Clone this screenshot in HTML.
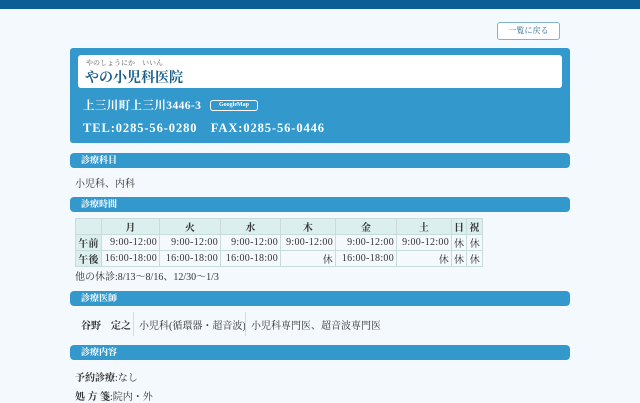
<!DOCTYPE html>
<html><head><meta charset="utf-8"><style>
*{margin:0;padding:0;box-sizing:border-box}
body{width:640px;height:400px;overflow:hidden;background:#f3f9fc;font-family:"Liberation Serif","Noto Serif CJK SC",serif;color:#333;position:relative;font-size:10px}
.a{position:absolute;white-space:nowrap}
.top{left:0;top:0;width:640px;height:9px;background:#0b5f97}
.btn{left:497px;top:22px;width:63px;height:18px;border:1px solid #7fb3cf;border-radius:3px;background:#fff;color:#2a6b95;font-size:8px;text-align:center;line-height:16px}
.main{left:70px;top:48px;width:500px;height:95px;background:#3399cc;border-radius:3px}
.inner{left:78px;top:55px;width:484px;height:33px;background:#fff;border-radius:3px}
.hd{left:70px;width:500px;height:15px;background:#3399cc;border-radius:4px;color:#fff;font-weight:bold;font-size:9px;line-height:15px;padding-left:11px}
table{position:absolute;left:75px;top:218px;width:407px;table-layout:fixed;border-collapse:collapse;font-size:10px;letter-spacing:0.3px}
td,th{border:1px solid #c8dcdc;height:15px;padding:0 2px;text-align:right;white-space:nowrap;overflow:hidden}
th{background:#dcefef;text-align:center;font-weight:bold}
td.l{background:#dcefef;font-weight:bold;text-align:center}
.vl{width:1px;background:#cfdde5;top:312px;height:24px}
</style></head><body>
<div class="a top"></div>
<div class="a btn">一覧に戻る</div>
<div class="a main"></div>
<div class="a inner"></div>
<div class="a" style="left:86px;top:58px;font-size:7px;color:#555">やのしょうにか　いいん</div>
<div class="a" style="left:85px;top:67px;font-size:14px;font-weight:bold;color:#1b5d8c">やの小児科医院</div>
<div class="a" style="left:83px;top:97px;font-size:11.5px;font-weight:bold;color:#fff;letter-spacing:0.4px">上三川町上三川3446-3</div>
<div class="a" style="left:210px;top:100px;width:48px;height:11px;border:1px solid #fff;border-radius:3px;color:#fff;font-size:6px;font-weight:bold;text-align:center;line-height:9px">GoogleMap</div>
<div class="a" style="left:83px;top:118px;font-size:12.5px;font-weight:bold;color:#fff;letter-spacing:0.9px">TEL:0285-56-0280　FAX:0285-56-0446</div>
<div class="a hd" style="top:153px">診療科目</div>
<div class="a" style="left:75px;top:175px">小児科、内科</div>
<div class="a hd" style="top:197px">診療時間</div>
<table>
<colgroup><col style="width:26px"><col style="width:58px"><col style="width:61px"><col style="width:60px"><col style="width:55px"><col style="width:61px"><col style="width:55px"><col style="width:15px"><col style="width:16px"></colgroup>
<tr><th></th><th>月</th><th>火</th><th>水</th><th>木</th><th>金</th><th>土</th><th>日</th><th>祝</th></tr>
<tr><td class="l">午前</td><td>9:00-12:00</td><td>9:00-12:00</td><td>9:00-12:00</td><td>9:00-12:00</td><td>9:00-12:00</td><td>9:00-12:00</td><td>休</td><td>休</td></tr>
<tr><td class="l">午後</td><td>16:00-18:00</td><td>16:00-18:00</td><td>16:00-18:00</td><td>休</td><td>16:00-18:00</td><td>休</td><td>休</td><td>休</td></tr>
</table>
<div class="a" style="left:75px;top:268px">他の休診:8/13～8/16、12/30～1/3</div>
<div class="a hd" style="top:291px">診療医師</div>
<div class="a" style="left:81px;top:317px;font-weight:bold">谷野　定之</div>
<div class="a vl" style="left:133px"></div>
<div class="a" style="left:139px;top:317px">小児科(循環器・超音波)</div>
<div class="a vl" style="left:245px"></div>
<div class="a" style="left:251px;top:317px">小児科専門医、超音波専門医</div>
<div class="a hd" style="top:345px">診療内容</div>
<div class="a" style="left:75px;top:369px"><b>予約診療</b>:なし</div>
<div class="a" style="left:75px;top:388px"><b>処 方 箋</b>:院内・外</div>
</body></html>
